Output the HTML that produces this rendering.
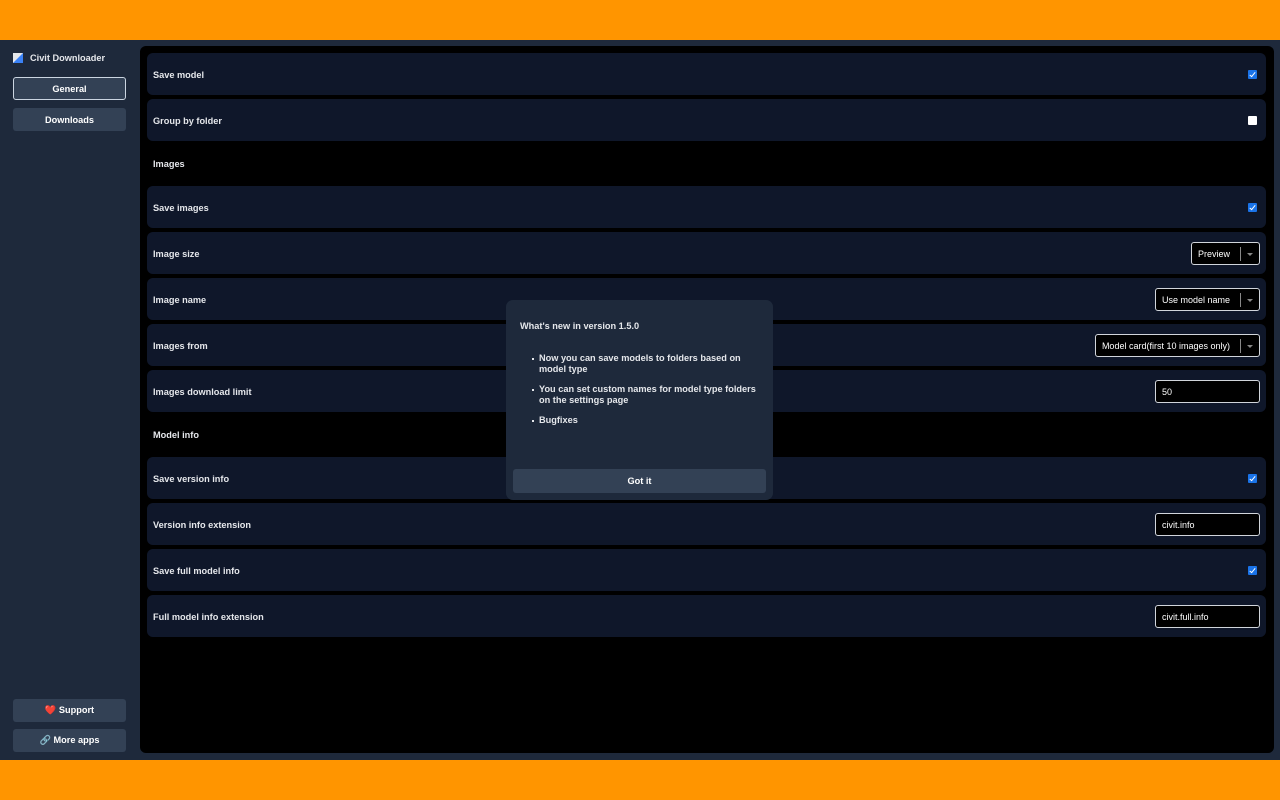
<!DOCTYPE html>
<html><head><meta charset="utf-8"><style>
*{box-sizing:border-box;margin:0;padding:0}
body{width:1280px;height:800px;background:#ff9500;font-family:"Liberation Sans",sans-serif;font-weight:bold;color:#e5e7eb;font-size:9.2px;position:relative;overflow:hidden}
.app{position:absolute;left:0;top:40px;width:1280px;height:720px;background:#1e293b}
.logo{position:absolute;left:13px;top:13px;display:flex;align-items:center;gap:7px;font-size:9.2px;color:#e5e7eb}
.sb{position:absolute;left:13px;width:113px;height:23px;border-radius:3px;background:#334155;color:#fff;font-size:9.2px;display:flex;align-items:center;justify-content:center}
.main{position:absolute;left:140px;top:6px;width:1134px;height:707px;background:#000;border-radius:6px}
.row{position:absolute;left:7px;width:1119px;height:42px;background:#0f172a;border-radius:6px;display:flex;align-items:center;padding:1px 6px 0;justify-content:space-between}
.lbl{position:absolute;left:13px}
.cb{width:9px;height:9px;border-radius:1px;background:#fff;margin-right:3px}
.cb.on{background:#1a73e8;position:relative}
.cb.on:after{content:"";position:absolute;left:3px;top:1px;width:2px;height:5px;border:solid #fff;border-width:0 1.2px 1.2px 0;transform:rotate(40deg)}
.sel{height:23px;border:1px solid #d1d5db;border-radius:3px;background:#000;color:#fff;font-weight:normal;font-size:9px;display:flex;align-items:center;padding-left:6px}
.sel .bar{width:1px;height:14px;background:#888;margin-left:10px}
.sel .ar{width:0;height:0;border:3px solid transparent;border-top:3px solid #888;margin:4px 6px 0 6px}
.inp{width:105px;height:23px;border:1px solid #d1d5db;border-radius:3px;background:#000;color:#fff;font-weight:normal;font-size:9px;display:flex;align-items:center;padding-left:6px}
.modal{position:absolute;left:506px;top:300px;width:267px;height:200px;background:#1e293b;border-radius:7px}
.modal ul{position:absolute;left:33px;top:53px;width:224px;list-style:none}
.modal li{position:relative;line-height:11px;margin-bottom:9px;font-size:9.2px}
.modal li:before{content:"";position:absolute;left:-7px;top:5px;width:2px;height:2px;background:#e5e7eb}
.got{position:absolute;left:7px;top:169px;width:253px;height:24px;background:#334155;border-radius:3px;display:flex;align-items:center;justify-content:center;color:#fff}
</style></head><body>
<div class="app">
<div class="logo"><svg width="10" height="10"><rect width="10" height="10" fill="#e5e7eb"/><path d="M10 0V10H0Z" fill="#3b82f6"/></svg>Civit Downloader</div>
<div class="sb" style="top:37px;border:1px solid #cbd5e1">General</div>
<div class="sb" style="top:68px">Downloads</div>
<div class="sb" style="top:659px">❤️ Support</div>
<div class="sb" style="top:689px">🔗 More apps</div>
<div class="main">
<div class="row" style="top:7px"><span>Save model</span><div class="cb on"></div></div>
<div class="row" style="top:53px"><span>Group by folder</span><div class="cb"></div></div>
<div class="lbl" style="top:113px">Images</div>
<div class="row" style="top:140px"><span>Save images</span><div class="cb on"></div></div>
<div class="row" style="top:186px"><span>Image size</span><div class="sel">Preview<span class="bar"></span><span class="ar"></span></div></div>
<div class="row" style="top:232px"><span>Image name</span><div class="sel">Use model name<span class="bar"></span><span class="ar"></span></div></div>
<div class="row" style="top:278px"><span>Images from</span><div class="sel">Model card(first 10 images only)<span class="bar"></span><span class="ar"></span></div></div>
<div class="row" style="top:324px"><span>Images download limit</span><div class="inp">50</div></div>
<div class="lbl" style="top:384px">Model info</div>
<div class="row" style="top:411px"><span>Save version info</span><div class="cb on"></div></div>
<div class="row" style="top:457px"><span>Version info extension</span><div class="inp">civit.info</div></div>
<div class="row" style="top:503px"><span>Save full model info</span><div class="cb on"></div></div>
<div class="row" style="top:549px"><span>Full model info extension</span><div class="inp">civit.full.info</div></div>
</div>
</div>
<div class="modal">
<div style="position:absolute;left:14px;top:21px">What's new in version 1.5.0</div>
<ul><li>Now you can save models to folders based on model type</li><li>You can set custom names for model type folders on the settings page</li><li>Bugfixes</li></ul>
<div class="got">Got it</div>
</div>
</body></html>
